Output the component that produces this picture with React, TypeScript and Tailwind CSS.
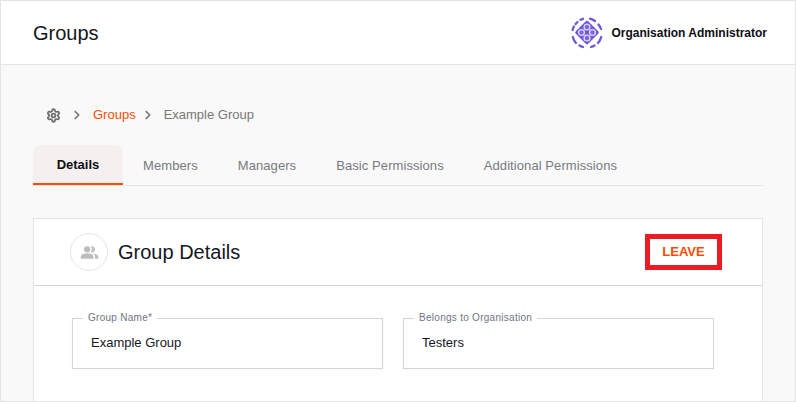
import React from 'react';
import { Settings, ChevronRight } from 'lucide-react';

function OrgLogo() {
    const nodes = [
        [16, 10],
        [10.5, 15.5],
        [21.5, 15.5],
        [16, 21],
    ];
    return (
        <svg width="32" height="32" viewBox="0 0 32 32" fill="none">
            <g stroke="#6f57d9" strokeWidth="2.3" strokeLinecap="round">
                <path d="M12 1.8 A14.5 14.5 0 0 0 9.5 2.8" />
                <path d="M19 1.6 A14.5 14.5 0 0 1 24 4" />
                <path d="M6.5 5 A14.5 14.5 0 0 0 4.6 7" />
                <path d="M3 9.5 A14.5 14.5 0 0 0 1.6 13" />
                <path d="M27.5 7.5 A14.5 14.5 0 0 1 30 12" />
                <path d="M1.8 20 A14.5 14.5 0 0 0 5 26" />
                <path d="M30.2 20 A14.5 14.5 0 0 1 27 26" />
                <path d="M8.5 28.5 A14.5 14.5 0 0 0 12 30" />
                <path d="M20 30 A14.5 14.5 0 0 0 23.5 28.5" />
            </g>
            <path d="M16 5.5 L26 15.5 L16 25.5 L6 15.5 Z" fill="#6f57d9" stroke="#6f57d9" strokeWidth="3.5" strokeLinejoin="round" />
            {nodes.map(([cx, cy]) => (
                <circle key={`${cx}-${cy}`} cx={cx} cy={cy} r="2.9" fill="#7d66de" stroke="#dcd6f8" strokeWidth="1.4" />
            ))}
        </svg>
    );
}

function GroupIcon() {
    return (
        <svg width="19" height="19" viewBox="0 0 24 24" fill="#bdbdbd">
            <path d="M16.67 13.13C18.04 14.06 19 15.32 19 17v3h4v-3c0-2.18-3.57-3.47-6.33-3.87z" />
            <circle cx="9" cy="8" r="4" />
            <path d="M15 12c2.21 0 4-1.79 4-4s-1.79-4-4-4c-.47 0-.91.1-1.33.24C14.5 5.27 15 6.58 15 8s-.5 2.73-1.33 3.76c.42.14.86.24 1.33.24z" />
            <path d="M9 13c-2.67 0-8 1.34-8 4v3h16v-3c0-2.66-5.33-4-8-4z" />
        </svg>
    );
}

function OutlinedField({ label, value }: { label: string; value: string }) {
    return (
        <div className="relative flex h-[51px] w-[311px] items-center border border-[#d3d5dc] bg-white pb-[2px] pl-[18px] shadow-[0_1px_2px_rgba(0,0,0,0.04)]">
            <span className="absolute top-[-7px] left-[10px] bg-white px-[5px] text-[10px] leading-[12px] tracking-[0.28px] text-[#70757f]">{label}</span>
            <span className="text-[13px] text-[#15171c]">{value}</span>
        </div>
    );
}

const tabs = ['Members', 'Managers', 'Basic Permissions', 'Additional Permissions'];

export default function App() {
    return (
        <div className="h-[402px] w-[796px] overflow-hidden border border-[#e4e4e4] bg-[#f9f9f9] font-['Liberation_Sans',sans-serif]">
            {/* Header */}
            <header className="flex h-[64px] items-center justify-between border-b border-[#e4e4e4] bg-white pr-[28px] pl-[32px]">
                <h1 className="text-[20px] text-[#15171c]">Groups</h1>
                <div className="flex items-center gap-[8px]">
                    <OrgLogo />
                    <span className="text-[12px] font-bold text-[#0d0d14]">Organisation Administrator</span>
                </div>
            </header>

            <main className="px-[32px] pt-[40px]">
                {/* Breadcrumb */}
                <nav className="flex h-[20px] items-center pl-[13px] text-[13px]">
                    <Settings size={15} strokeWidth={3} className="text-[#707070]" />
                    <ChevronRight size={14} strokeWidth={3} className="ml-[9px] text-[#777777]" />
                    <span className="ml-[9px] text-[#fc4c02]">Groups</span>
                    <ChevronRight size={14} strokeWidth={3} className="ml-[5px] text-[#777777]" />
                    <span className="ml-[9px] text-[#777777]">Example Group</span>
                </nav>

                {/* Tabs */}
                <div className="mt-[20px] flex h-[41px] items-stretch border-b border-[#e4e4e4] text-[13px]">
                    <div className="flex w-[90px] items-center justify-center rounded-t-[8px] border-b-[2px] border-[#fc4c02] bg-[#f5f0ef] pt-[1px] font-bold text-[#0d0d14]">Details</div>
                    <div className="flex gap-[40px] pl-[20px]">
                        {tabs.map((tab) => (
                            <div key={tab} className="flex items-center pt-[1px] tracking-[0.08px] text-[#777a80]">{tab}</div>
                        ))}
                    </div>
                </div>

                {/* Card */}
                <section className="mt-[32px] h-[200px] border border-[#e4e4e4] bg-white">
                    <div className="flex h-[67px] items-center justify-between border-b border-[#d3d5dc] pr-[40px] pl-[36px]">
                        <div className="flex items-center gap-[10px]">
                            <div className="flex h-[38px] w-[38px] items-center justify-center rounded-full border border-[#e4e4e4]">
                                <GroupIcon />
                            </div>
                            <h2 className="text-[20px] text-[#15171c]">Group Details</h2>
                        </div>
                        <button className="flex h-[36px] w-[77px] items-center justify-center border-[5px] border-[#ed1c24] text-[13px] font-bold text-[#fc4c02]">LEAVE</button>
                    </div>
                    <div className="flex gap-[20px] pt-[32px] pl-[38px]">
                        <OutlinedField label="Group Name*" value="Example Group" />
                        <OutlinedField label="Belongs to Organisation" value="Testers" />
                    </div>
                </section>
            </main>
        </div>
    );
}
